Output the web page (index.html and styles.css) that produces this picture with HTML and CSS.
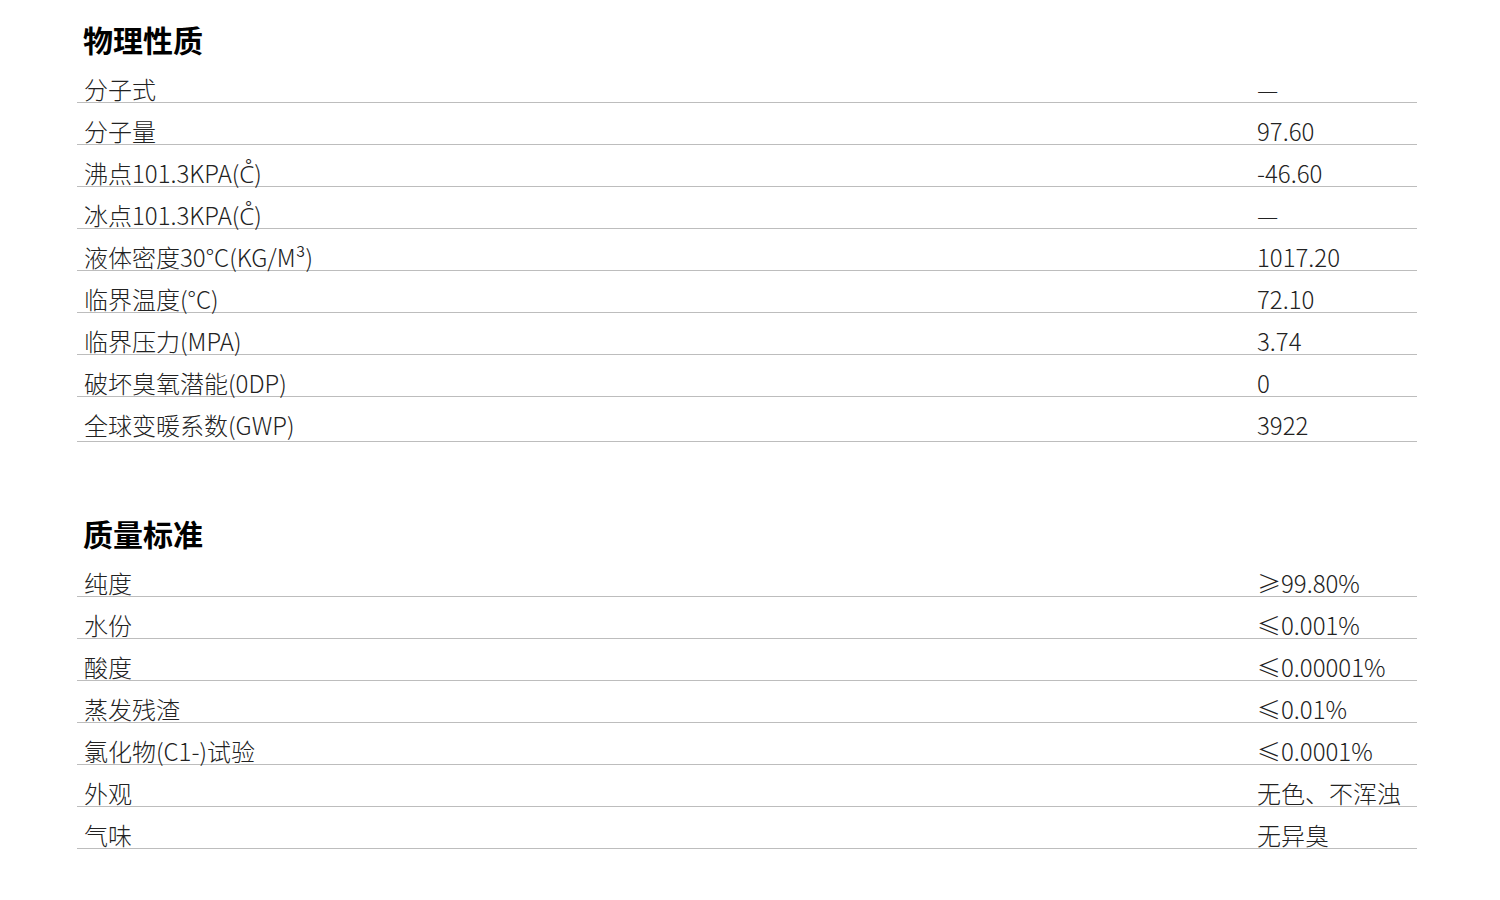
FILE: index.html
```html
<!DOCTYPE html>
<html lang="zh-CN">
<head>
<meta charset="utf-8">
<title>物理性质</title>
<link rel="stylesheet" href="styles.css">
</head>
<body>
<main class="page">
  <section class="spec">
    <h2 class="spec-title">物理性质</h2>
    <div class="spec-row"><span class="spec-label">分子式</span><span class="spec-value">—</span></div>
    <div class="spec-row"><span class="spec-label">分子量</span><span class="spec-value">97.60</span></div>
    <div class="spec-row"><span class="spec-label">沸点101.3KPA(C̊)</span><span class="spec-value">-46.60</span></div>
    <div class="spec-row"><span class="spec-label">冰点101.3KPA(C̊)</span><span class="spec-value">—</span></div>
    <div class="spec-row"><span class="spec-label">液体密度30°C(KG/M³)</span><span class="spec-value">1017.20</span></div>
    <div class="spec-row"><span class="spec-label">临界温度(°C)</span><span class="spec-value">72.10</span></div>
    <div class="spec-row"><span class="spec-label">临界压力(MPA)</span><span class="spec-value">3.74</span></div>
    <div class="spec-row"><span class="spec-label">破坏臭氧潜能(0DP)</span><span class="spec-value">0</span></div>
    <div class="spec-row spec-row--last"><span class="spec-label">全球变暖系数(GWP)</span><span class="spec-value">3922</span></div>
  </section>
  <section class="spec spec--second">
    <h2 class="spec-title">质量标准</h2>
    <div class="spec-row"><span class="spec-label">纯度</span><span class="spec-value">≥99.80%</span></div>
    <div class="spec-row"><span class="spec-label">水份</span><span class="spec-value">≤0.001%</span></div>
    <div class="spec-row"><span class="spec-label">酸度</span><span class="spec-value">≤0.00001%</span></div>
    <div class="spec-row"><span class="spec-label">蒸发残渣</span><span class="spec-value">≤0.01%</span></div>
    <div class="spec-row"><span class="spec-label">氯化物(C1-)试验</span><span class="spec-value">≤0.0001%</span></div>
    <div class="spec-row"><span class="spec-label">外观</span><span class="spec-value">无色、不浑浊</span></div>
    <div class="spec-row"><span class="spec-label">气味</span><span class="spec-value">无异臭</span></div>
  </section>
</main>
</body>
</html>
```
FILE: styles.css
```css
html, body {
  margin: 0;
  padding: 0;
  background: #ffffff;
}

body {
  font-family: "Noto Sans CJK SC", "Noto Sans", sans-serif;
  color: #222222;
}

.page {
  width: 1340px;
  padding: 24px 0 0 77px;
}

.spec--second {
  margin-top: 76px;
}

.spec-title {
  margin: 0 0 7px 0;
  padding-left: 6px;
  font-size: 30px;
  line-height: 30px;
  font-weight: 700;
  color: #000000;
}

.spec-row {
  display: grid;
  grid-template-columns: 1fr 160px;
  padding: 16px 0 1px 7px;
  font-size: 24px;
  line-height: 24px;
  font-weight: 300;
  border-bottom: 1px solid #bdbdbd;
  white-space: nowrap;
}

.spec-row--last {
  padding-bottom: 4px;
}
```
